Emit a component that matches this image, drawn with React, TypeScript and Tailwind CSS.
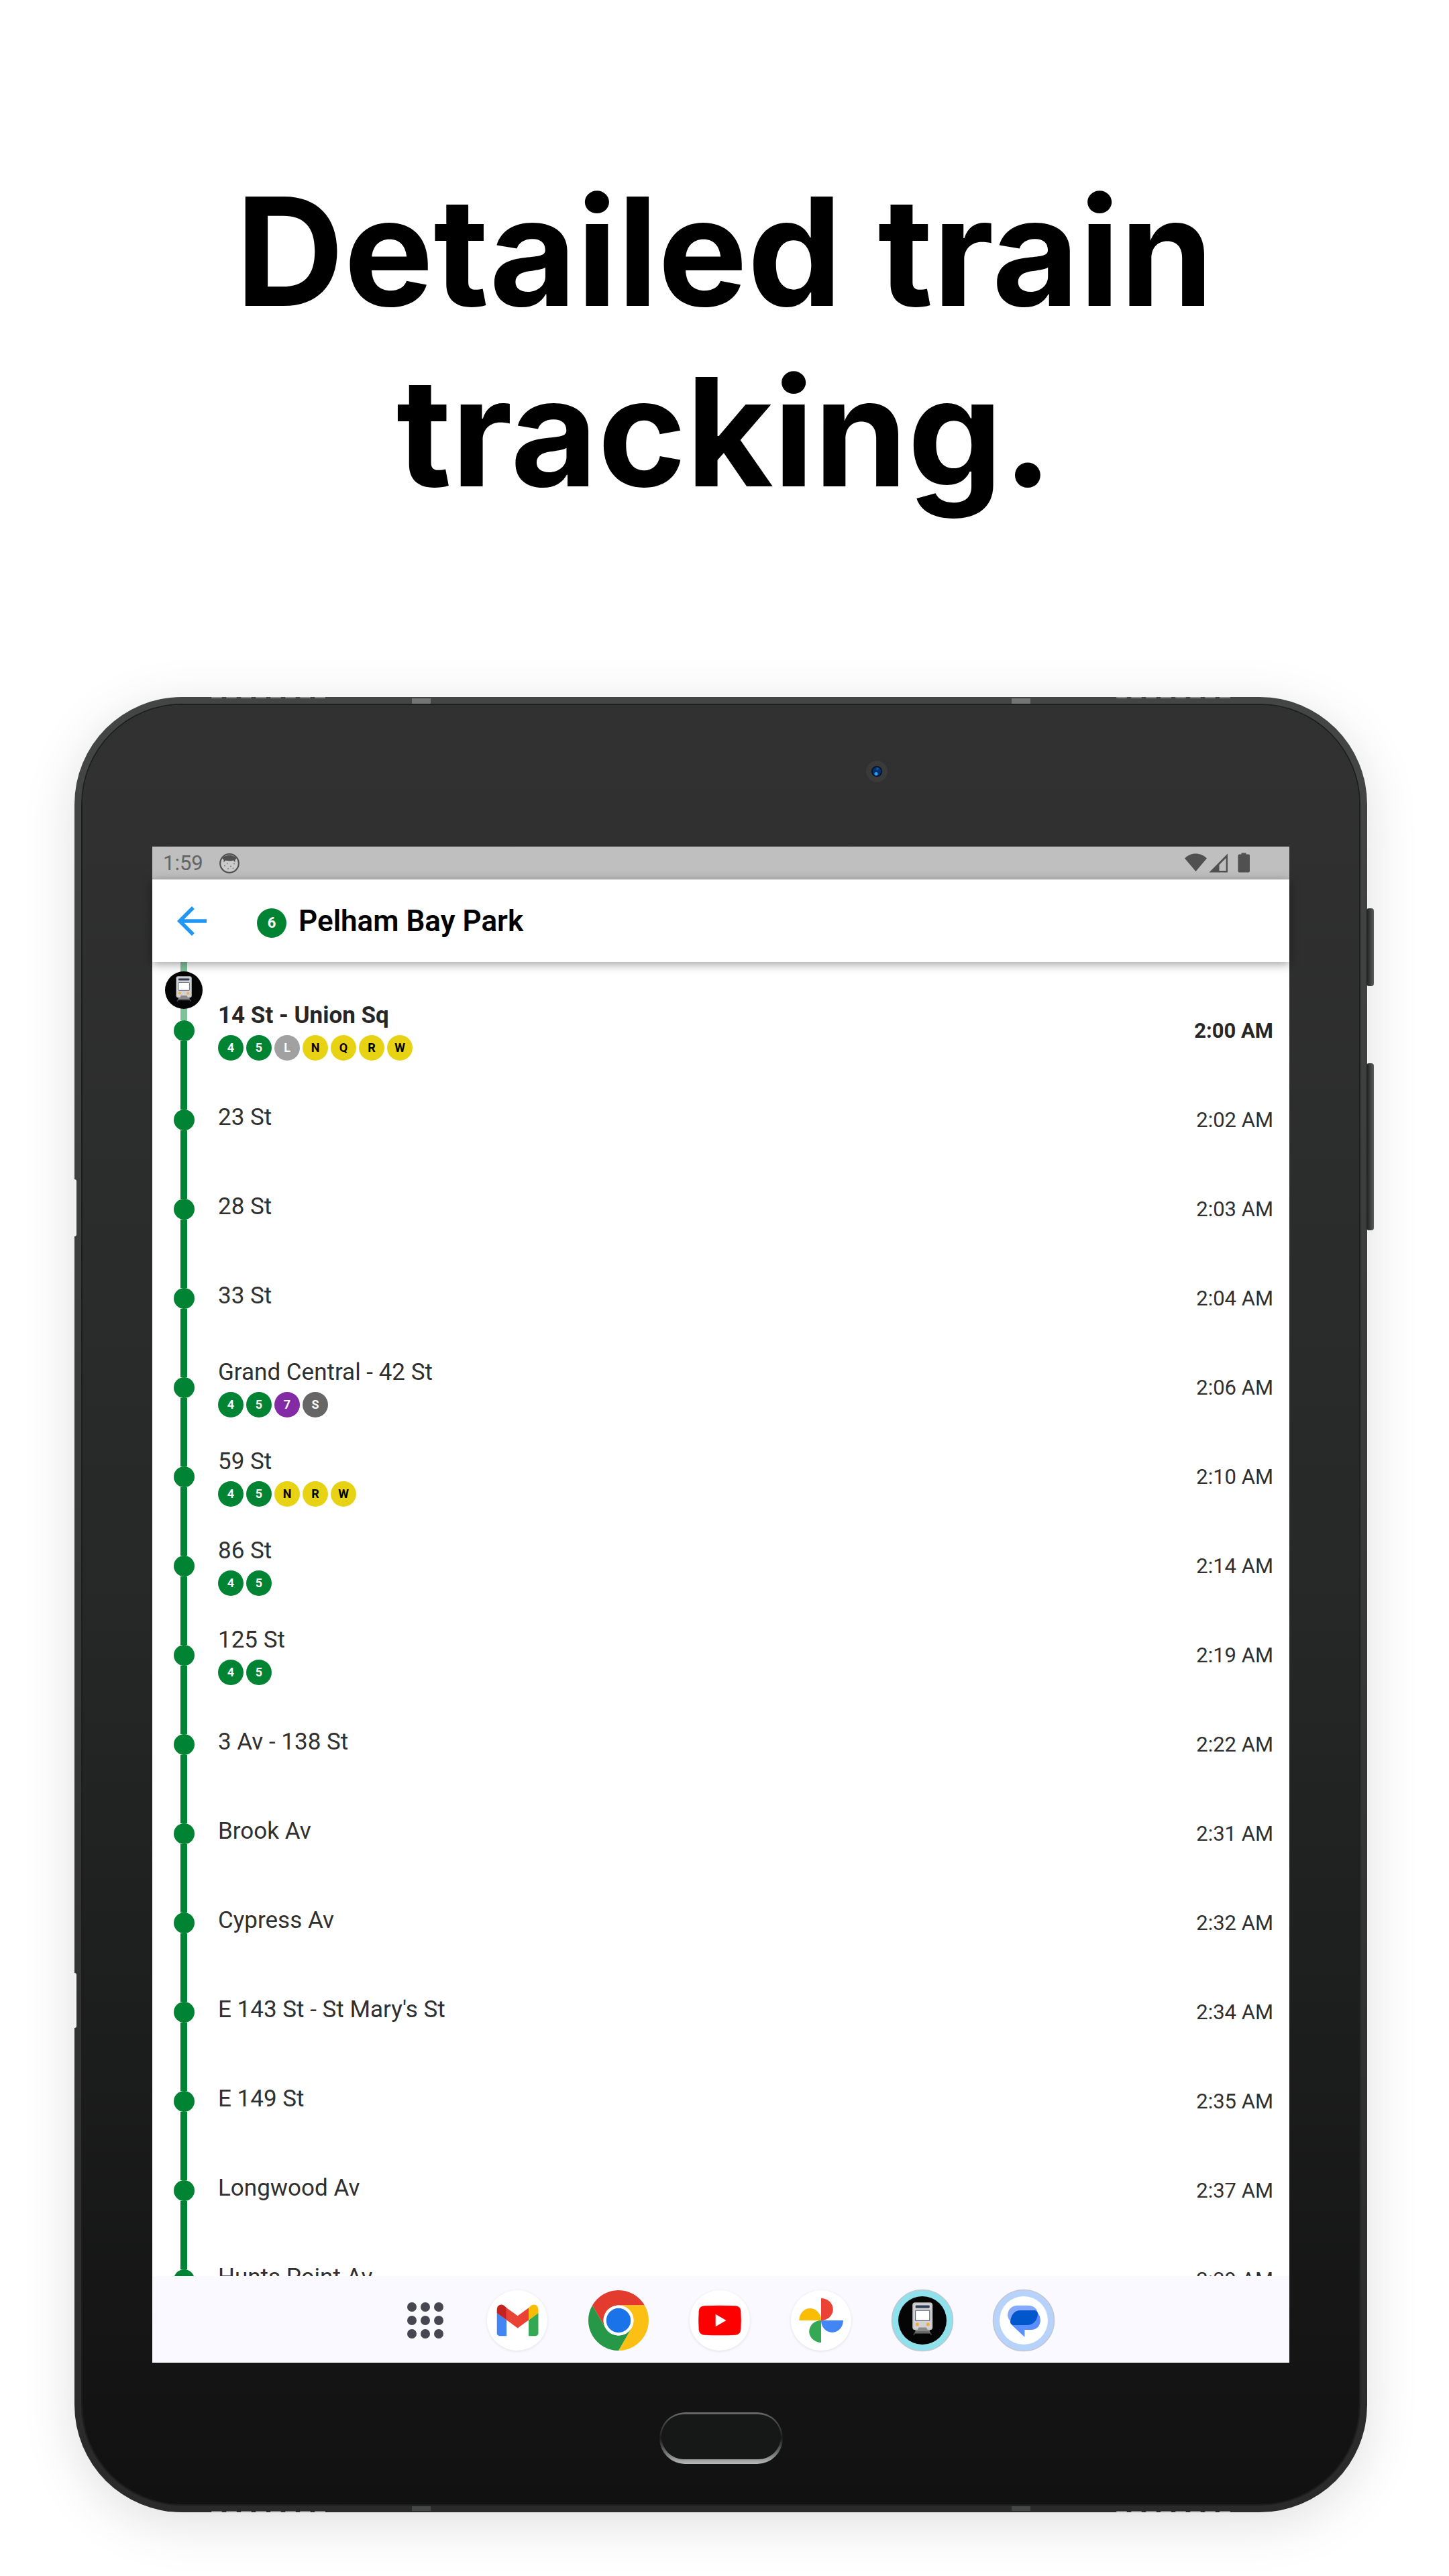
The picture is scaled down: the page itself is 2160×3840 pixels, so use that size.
import React from "react";

interface Stop {
  name: string;
  time: string;
  routes: string[];
}

const stops: Stop[] = [
  { name: "14 St - Union Sq", time: "2:00 AM", routes: ["4", "5", "L", "N", "Q", "R", "W"] },
  { name: "23 St", time: "2:02 AM", routes: [] },
  { name: "28 St", time: "2:03 AM", routes: [] },
  { name: "33 St", time: "2:04 AM", routes: [] },
  { name: "Grand Central - 42 St", time: "2:06 AM", routes: ["4", "5", "7", "S"] },
  { name: "59 St", time: "2:10 AM", routes: ["4", "5", "N", "R", "W"] },
  { name: "86 St", time: "2:14 AM", routes: ["4", "5"] },
  { name: "125 St", time: "2:19 AM", routes: ["4", "5"] },
  { name: "3 Av - 138 St", time: "2:22 AM", routes: [] },
  { name: "Brook Av", time: "2:31 AM", routes: [] },
  { name: "Cypress Av", time: "2:32 AM", routes: [] },
  { name: "E 143 St - St Mary's St", time: "2:34 AM", routes: [] },
  { name: "E 149 St", time: "2:35 AM", routes: [] },
  { name: "Longwood Av", time: "2:37 AM", routes: [] },
  { name: "Hunts Point Av", time: "2:39 AM", routes: [] },
];

const routeColors: Record<string, string> = {
  "4": "bg-[#008333] text-white",
  "5": "bg-[#008333] text-white",
  "6": "bg-[#008333] text-white",
  "7": "bg-[#832ba5] text-white",
  L: "bg-[#a1a1a1] text-white",
  S: "bg-[#666666] text-white",
  N: "bg-[#e7d314] text-black",
  Q: "bg-[#e7d314] text-black",
  R: "bg-[#e7d314] text-black",
  W: "bg-[#e7d314] text-black",
};

const RouteBullet: React.FC<{ route: string; large?: boolean }> = ({ route, large }) => (
  <span
    className={`flex items-center justify-center rounded-full font-bold ${
      large ? "size-[44px] text-[22px]" : "size-[38px] text-[18px]"
    } ${routeColors[route]}`}
  >
    {route}
  </span>
);

// Front of a train, drawn around the centre (46, 46)
const TrainGlyph: React.FC = () => (
  <g>
    <circle cx="46" cy="46" r="36" fill="#050505" />
    <path d="M33 67.5 37 61.5M59.4 67.5l-4-6" stroke="#3b455c" strokeWidth="2" />
    <rect x="35.5" y="63.6" width="21.4" height="1.8" fill="#8d8d8d" />
    <rect x="31.2" y="19.3" width="30" height="41" rx="4" fill="#c6c6c6" />
    <rect x="33" y="21" width="26.4" height="37.6" rx="3" fill="#d2d2d2" />
    <rect x="35.7" y="23.4" width="21" height="4" rx="1" fill="#2f3a56" />
    <rect x="35.6" y="31.2" width="21.2" height="15.2" rx="1" fill="#fff" stroke="#5f687c" strokeWidth="1.2" />
    <circle cx="38.2" cy="52" r="2.5" fill="#f5ab3d" />
    <circle cx="54.2" cy="52" r="2.5" fill="#f5ab3d" />
    <path d="M40.5 56.4h11.4l1.8 3.6h3.2v2.8H35.5V60h3.2z" fill="#8a8a8a" />
  </g>
);

const StatusBar: React.FC = () => (
  <div className="flex h-[49px] items-center justify-between bg-[#bfbfbf] pr-[58px] pl-[16px] text-[#646464]">
    <div className="flex items-center gap-[24px]">
      <span className="text-[31px] leading-none">1:59</span>
      <svg className="size-[30px]" viewBox="0 0 30 30" fill="none">
        <circle cx="15" cy="15" r="13.8" fill="#cbcbcb" stroke="#505050" strokeWidth="2.2" />
        <path d="M4.5 7.5C8 1.5 22 1.5 25.5 7.5L23.5 10v3.5l-2.8-3c-3 1.2-8.4 1.2-11.4 0l-2.8 3V10z" fill="#505050" />
        <g fill="#777">
          <circle cx="8" cy="18.5" r="1" />
          <circle cx="12" cy="15.5" r=".8" />
          <circle cx="17" cy="19.5" r="1" />
          <circle cx="22" cy="15.5" r=".9" />
          <circle cx="13" cy="23" r=".9" />
          <circle cx="20.5" cy="22.5" r=".9" />
        </g>
      </svg>
    </div>
    <svg className="h-[31px] w-[98px]" viewBox="0 0 98 31" fill="#505050">
      <path d="M0 8.5C9-1 24-1 33 8.5L16.5 28z" />
      <path fillRule="evenodd" d="M64 1.5V29.5H36.5zM61.6 8 51.5 18.2V27h10.1z" />
      <path d="M84.5 2.5V.5h7v2H95q2 0 2 2V27.5q0 2-2 2H81.5q-2 0-2-2V4.5q0-2 2-2z" />
    </svg>
  </div>
);

const AppBar: React.FC = () => (
  <header className="relative z-10 flex h-[123px] items-center gap-[64px] bg-white pl-[26px] shadow-[0_3px_14px_rgba(0,0,0,0.4)]">
    <button type="button" aria-label="Back" className="size-[66px] text-[#2196f3]">
      <svg className="size-full" viewBox="0 0 24 24" fill="currentColor">
        <path d="M20 11H7.83l5.59-5.59L12 4l-8 8 8 8 1.41-1.41L7.83 13H20v-2z" />
      </svg>
    </button>
    <div className="flex items-end gap-[18px]">
      <RouteBullet route="6" large />
      <h2 className="text-[44px] leading-[50px] font-semibold text-black">Pelham Bay Park</h2>
    </div>
  </header>
);

const StopRow: React.FC<{ stop: Stop; next: boolean }> = ({ stop, next }) => (
  <li className={`flex h-[133px] shrink-0 gap-[4px] pr-[24px] ${next ? "font-bold text-[#262626]" : "text-[#303030]"}`}>
    <div className="flex w-[94px] flex-col items-center">
      <span className={`w-[10px] flex-1 ${next ? "bg-[#80c199]" : "bg-[#008333]"}`} />
      <span className="size-[31px] rounded-full bg-[#008333]" />
      <span className="w-[10px] flex-1 bg-[#008333]" />
    </div>
    <div className="flex flex-1 flex-col justify-center gap-[8px]">
      <span className="text-[35px] leading-[42px]">{stop.name}</span>
      <div className="flex gap-[4px]">
        {stop.routes.map((route) => (
          <RouteBullet key={route} route={route} />
        ))}
      </div>
    </div>
    <time className="self-center text-[31px] leading-[36px]">{stop.time}</time>
  </li>
);

const StopList: React.FC = () => (
  <div className="relative flex min-h-0 flex-1 flex-col overflow-hidden bg-white">
    <div className="flex h-[36px] w-[94px] shrink-0 justify-center">
      <span className="w-[10px] bg-[#80c199]" />
    </div>
    <ol className="flex flex-col">
      {stops.map((stop, i) => (
        <StopRow key={stop.name} stop={stop} next={i === 0} />
      ))}
    </ol>
    {/* current position of the train */}
    <svg className="absolute top-[14px] left-[19px] size-[56px]" viewBox="10 10 72 72">
      <TrainGlyph />
    </svg>
  </div>
);

const dockButton = "size-[90px] shrink-0 rounded-full";
const whiteIcon = "size-full rounded-full bg-white shadow-[0_1px_4px_rgba(0,0,0,0.1)]";

const Dock: React.FC = () => (
  <nav className="flex h-[129px] shrink-0 items-center justify-center gap-[61px] bg-[#f9f9ff] pt-[2px] pl-[24px]">
    <button type="button" aria-label="All apps" className="grid w-[62px] grid-cols-[repeat(3,14px)] justify-center gap-[6px]">
      {Array.from({ length: 9 }, (_, i) => (
        <span key={i} className="size-[14px] rounded-full bg-[#474751]" />
      ))}
    </button>
    <button type="button" aria-label="Gmail" className={dockButton}>
      <svg className={whiteIcon} viewBox="0 0 88 88">
        <path d="M14.4 33 28.5 43.4V66.7H18.5a4 4 0 0 1-4.1-4z" fill="#4285f4" />
        <path d="M74.8 33 60.7 43.4V66.7H70.7a4 4 0 0 0 4.1-4z" fill="#34a853" />
        <path d="M28.5 25.7 44.6 37.4 60.7 25.7V43.4L44.6 55.2 28.5 43.4z" fill="#ea4335" />
        <path d="M14.4 33.3V28c0-6.5 7.2-9.7 12-4.2l2.1 1.9v17.7z" fill="#c5221f" />
        <path d="M74.8 33.3V28c0-6.5-7.2-9.7-12-4.2l-2.1 1.9v17.7z" fill="#fbbc04" />
      </svg>
    </button>
    <button type="button" aria-label="Chrome" className={dockButton}>
      <svg className="size-full" viewBox="0 0 88 88">
        <path d="M44 22H82.1A44 44 0 0 0 5.9 22L25 55A22 22 0 0 1 44 22z" fill="#e33b2e" />
        <path d="M82.1 22A44 44 0 0 1 44 88L63 55A22 22 0 0 0 44 22z" fill="#fcc014" />
        <path d="M44 88A44 44 0 0 1 5.9 22L25 55A22 22 0 0 0 63 55z" fill="#279847" />
        <circle cx="44" cy="44" r="22" fill="#fff" />
        <circle cx="44" cy="44" r="17.8" fill="#1a73e8" />
      </svg>
    </button>
    <button type="button" aria-label="YouTube" className={dockButton}>
      <svg className={whiteIcon} viewBox="0 0 88 88">
        <path
          d="M21 22.8Q44 21.6 67 22.8 74 23.3 74.6 30.5 75.6 44 74.6 57.5 74 64.7 67 65.2 44 66.4 21 65.2 14 64.7 13.4 57.5 12.4 44 13.4 30.5 14 23.3 21 22.8z"
          fill="#f00"
        />
        <path d="M37.8 35 53.3 44 37.8 53z" fill="#fff" />
      </svg>
    </button>
    <button type="button" aria-label="Photos" className={dockButton}>
      <svg className={whiteIcon} viewBox="0 0 88 88">
        <path d="M44 11.7a17.4 16.15 0 0 1 0 32.3z" fill="#ea4335" />
        <path d="M12 44a16 17.6 0 0 1 32 0z" fill="#fbbc04" />
        <path d="M44 44H76.2a16.1 17.6 0 0 1-32.2 0z" fill="#4285f4" />
        <path d="M44 44V76.2a17.4 16.1 0 0 1 0-32.2z" fill="#34a853" />
      </svg>
    </button>
    <button type="button" aria-label="Train tracker" className={dockButton}>
      <svg className="size-full overflow-visible" viewBox="1 1 90 90">
        <circle cx="46" cy="46" r="45.5" fill="#8fe1ec" stroke="#c3c6cf" strokeWidth="1.5" />
        <TrainGlyph />
      </svg>
    </button>
    <button type="button" aria-label="Messages" className={dockButton}>
      <svg className="size-full overflow-visible" viewBox="1 1 90 90">
        <circle cx="46" cy="46" r="45.5" fill="#b7d3fc" stroke="#c3c6cf" strokeWidth="1.5" />
        <circle cx="46" cy="46" r="36" fill="#fff" />
        <path d="M37 23.7H53C61 23.7 67 29 67 37V50H30C25 47 22.2 43 22.2 38 22.2 29.500 28.500 23.700 37 23.700z" fill="#85a9fb" />
        <path d="M27.500 51 34 40 66 34C69.500 37 70.800 41 70.800 46 70.800 54.500 65 60 57 60H47.400V70.700L29.500 54z" fill="#5b8eff" />
        <path d="M41 31H61C65 31 67 33 67 36.500 66.500 46 60 53 51 53H32C28 53 26 51 26 48 27 38 32 31 41 31z" fill="#0057cc" />
      </svg>
    </button>
  </nav>
);

const Grille: React.FC<{ className: string }> = ({ className }) => (
  <div className={`absolute flex gap-[6px] ${className}`}>
    {Array.from({ length: 8 }, (_, i) => (
      <span key={i} className="h-[2px] w-[16px] rounded-full bg-[#8c8c8c]" />
    ))}
  </div>
);

const Tablet: React.FC = () => (
  <div className="relative flex min-h-0 flex-1 rounded-[160px] bg-linear-to-b from-[#444645] to-[#2a2a2a] p-[12px] shadow-[0_16px_80px_rgba(0,0,0,0.13)]">
    {/* speaker grilles, antenna bands and side keys on the frame */}
    <Grille className="top-0 left-[204px]" />
    <Grille className="top-0 right-[204px]" />
    <Grille className="bottom-0 left-[204px]" />
    <Grille className="right-[204px] bottom-0" />
    <span className="absolute top-[2px] left-[503px] h-[8px] w-[28px] bg-[#727573]" />
    <span className="absolute top-[2px] right-[502px] h-[8px] w-[28px] bg-[#727573]" />
    <span className="absolute bottom-[2px] left-[503px] h-[7px] w-[28px] bg-[#454746]" />
    <span className="absolute right-[502px] bottom-[2px] h-[7px] w-[28px] bg-[#454746]" />
    <span className="absolute top-[719px] left-0 h-[85px] w-[3px] rounded-r-sm bg-[#f4f4f4]" />
    <span className="absolute top-[1902px] left-0 h-[82px] w-[3px] rounded-r-sm bg-[#f4f4f4]" />
    <span className="absolute top-[315px] right-[-10px] h-[116px] w-[11px] rounded-[4px] bg-linear-to-r from-[#1d1f1e] to-[#5c5c5c]" />
    <span className="absolute top-[546px] right-[-10px] h-[249px] w-[11px] rounded-[4px] bg-linear-to-r from-[#1d1f1e] to-[#5c5c5c]" />

    <div className="flex min-h-0 flex-1 flex-col rounded-[148px] bg-linear-to-b from-[#313131] via-[#262827] to-[#111111] px-[104px] shadow-[0_0_0_2px_#1c1e1d]">
      <div className="h-[211px] shrink-0 pt-[83px] pl-[62.8%]">
        <svg className="size-[32px]" viewBox="0 0 32 32">
          <circle cx="16" cy="16" r="16" fill="#3a3a3a" />
          <circle cx="16" cy="16" r="8" fill="#07101f" />
          <circle cx="16" cy="16" r="6.5" fill="#06306e" />
          <circle cx="15" cy="19.5" r="2.6" fill="#1fa2f5" />
          <circle cx="17" cy="12" r="2" fill="#0d5a9c" />
        </svg>
      </div>
      <div className="flex min-h-0 flex-1 flex-col">
        <StatusBar />
        <AppBar />
        <StopList />
        <Dock />
      </div>
      <div className="flex h-[211px] shrink-0 items-start justify-center pt-[74px]">
        <button
          type="button"
          aria-label="Home"
          className="h-[77px] w-[184px] rounded-full bg-linear-to-b from-[#6a6a6a] via-[#1c1c1c] to-[#b9bbbb] px-[3px] pt-[3px] pb-[7px]"
        >
          <span className="block h-full rounded-full bg-[#161817]" />
        </button>
      </div>
    </div>
  </div>
);

export default function App() {
  return (
    <main className="flex h-screen min-h-[1600px] flex-col bg-white pt-[240px] font-['Roboto',sans-serif]">
      <h1 className="mb-[261px] px-[120px] text-center font-['Inter',sans-serif] text-[224px] leading-[269px] font-bold text-black">
        Detailed train tracking.
      </h1>
      <div className="flex min-h-0 flex-1 flex-col pr-[122px] pb-[95px] pl-[111px]">
        <Tablet />
      </div>
    </main>
  );
}
